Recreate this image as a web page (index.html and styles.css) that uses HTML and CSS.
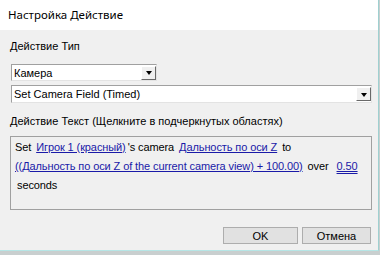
FILE: index.html
```html
<!DOCTYPE html>
<html lang="ru">
<head>
    <meta charset="UTF-8">
    <title>Настройка Действие</title>
    <link rel="stylesheet" href="styles.css">
</head>
<body>
    <div class="window">
        <div class="titlebar">Настройка Действие</div>
        <div class="content">
            <div class="label first">Действие Тип</div>
            <div class="combo short">
                <span class="combo-text">Камера</span>
                <span class="combo-btn"><span class="arrow"></span></span>
            </div>
            <div class="combo wide">
                <span class="combo-text">Set Camera Field (Timed)</span>
                <span class="combo-btn"><span class="arrow"></span></span>
            </div>
            <div class="label second">Действие Текст (Щелкните в подчеркнутых областях)</div>
            <div class="action-text">
                <div class="line">Set <a class="param">Игрок 1 (красный)</a>'s camera <a class="param">Дальность по оси Z</a> to</div>
                <div class="line"><a class="param first-word">((Дальность по оси Z of the current camera view) + 100.00)</a> over <a class="param double">0.50</a></div>
                <div class="line tail">seconds</div>
            </div>
            <div class="buttons">
                <button class="btn">OK</button>
                <button class="btn">Отмена</button>
            </div>
        </div>
    </div>
</body>
</html>
```

FILE: styles.css
```css
html, body {
    margin: 0;
    padding: 0;
}
body {
    width: 380px;
    height: 255px;
    background: #c9cfcf;
    font-family: "Liberation Sans", Arial, sans-serif;
    font-size: 11px;
    color: #000;
    overflow: hidden;
}
.window {
    width: 378px;
    height: 250px;
    background: #f0f0f0;
    border-right: 1px solid #9fd0d0;
    border-bottom: 1px solid #b6e6e6;
    display: flex;
    flex-direction: column;
}
.titlebar {
    height: 30px;
    background: #fff;
    padding-left: 8px;
    line-height: 30px;
    font-family: "Noto Sans", sans-serif;
    font-size: 11.5px;
    color: #000;
}
.content {
    padding: 0 6px 0 10px;
    display: flex;
    flex-direction: column;
}
.label {
    line-height: 14px;
}
.label.first {
    margin-top: 9px;
}
.label.second {
    margin-top: 11px;
}
.combo {
    height: 17px;
    box-sizing: border-box;
    background: #fff;
    border-top: 1px solid #a0a0a0;
    border-left: 1px solid #a0a0a0;
    border-right: 1px solid #e3e3e3;
    border-bottom: 1px solid #e3e3e3;
    display: flex;
    align-items: center;
    justify-content: space-between;
    margin-left: 1px;
}
.combo.short {
    width: 146px;
    margin-top: 11px;
}
.combo.wide {
    width: 361px;
    height: 18px;
    margin-top: 4px;
}
.combo-text {
    padding-left: 2px;
    line-height: 14px;
}
.combo-btn {
    width: 15px;
    height: 14px;
    box-sizing: border-box;
    background: #f0f0f0;
    border-top: 1px solid #fff;
    border-left: 1px solid #fff;
    border-right: 1px solid #696969;
    border-bottom: 1px solid #696969;
    display: flex;
    align-items: center;
    justify-content: center;
}
.arrow {
    width: 0;
    height: 0;
    border-left: 3px solid transparent;
    border-right: 3px solid transparent;
    border-top: 4px solid #000;
    margin-top: 1px;
}
.action-text {
    margin-top: 8px;
    width: 362px;
    height: 74px;
    box-sizing: border-box;
    border: 1px solid #a0a0a0;
    background: #f0f0f0;
    padding: 1px 4px 0 4px;
    line-height: 19px;
    letter-spacing: -0.1px;
}
.line {
    white-space: nowrap;
}
.param {
    color: #1a1aa8;
    text-decoration: underline;
    margin: 0 2px;
}
.param.first-word {
    margin-left: 0;
}
.param.double {
    text-decoration-style: double;
    margin-left: 5px;
}
.tail {
    padding-left: 2px;
}
.buttons {
    display: flex;
    justify-content: flex-end;
    gap: 4px;
    margin-top: 17px;
    padding-right: 1px;
}
.btn {
    height: 17px;
    box-sizing: border-box;
    font-family: "Liberation Sans", Arial, sans-serif;
    font-size: 11px;
    background: #e1e1e1;
    border: 1px solid #adadad;
    padding: 0;
    width: 75px;
    color: #000;
}
.btn + .btn {
    width: 69px;
}
```
